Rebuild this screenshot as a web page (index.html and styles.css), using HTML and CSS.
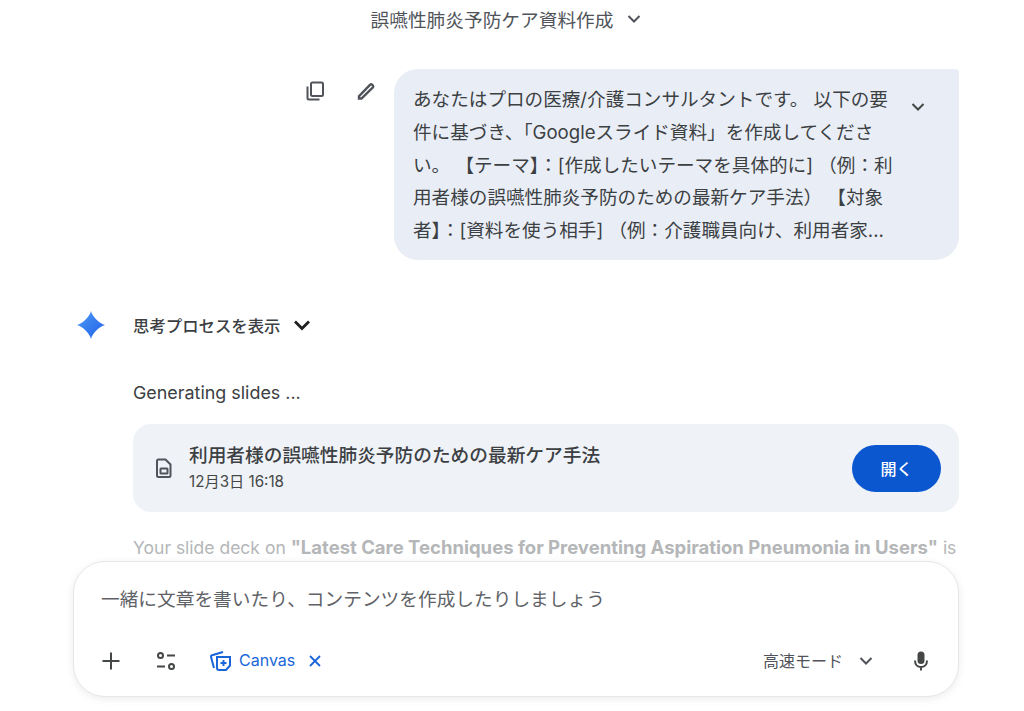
FILE: index.html
```html
<!DOCTYPE html>
<html lang="ja">
<head>
  <title>誤嚥性肺炎予防ケア資料作成</title>
  <link rel="stylesheet" href="styles.css">
</head>
<body>

<div class="page">
  <div class="title-bar">
    <span>誤嚥性肺炎予防ケア資料作成</span>
    <svg class="title-caret" viewBox="0 0 24 24"><path d="M6.500 9l5.500 5.500L17.500 9" /></svg>
  </div>

  <div class="user-row">
    <div class="user-actions">
      <svg class="action-icon" viewBox="0 0 24 24"><rect x="8" y="3.500" width="12" height="13.500" rx="1.500" /><path d="M4.500 7.500v11.500a1.500 1.500 0 0 0 1.500 1.500h10.500" /></svg>
      <svg class="action-icon" viewBox="0 0 24 24"><path class="pencil" d="M5 19.500v-2.300L16.200 5.600a1.300 1.300 0 0 1 1.800 0l.9.9a1.300 1.300 0 0 1 0 1.800L7.500 19.500z" /></svg>
    </div>
    <div class="bubble">
      <p>あなたはプロの医療/介護コンサルタントです。 以下の要<br>件に基づき、「Googleスライド資料」を作成してくださ<br>い。 【テーマ】：[作成したいテーマを具体的に] （例：利<br>用者様の誤嚥性肺炎予防のための最新ケア手法） 【対象<br>者】：[資料を使う相手] （例：介護職員向け、利用者家...</p>
      <svg class="bubble-caret" viewBox="0 0 24 24"><path d="M6.500 9l5.500 5.500L17.500 9" /></svg>
    </div>
  </div>

  <div class="thinking">
    <svg class="spark" viewBox="0 0 28 28">
      <defs>
        <linearGradient id="sparkFill" x1="0" y1="0" x2="1" y2="1">
          <stop offset="0" stop-color="#4f9bf5" />
          <stop offset="1" stop-color="#1f5fe8" />
        </linearGradient>
      </defs>
      <path d="M14 0C15.200 5.500 22.500 12.800 28 14C22.500 15.200 15.200 22.500 14 28C12.800 22.500 5.500 15.200 0 14C5.500 12.800 12.800 5.500 14 0Z" fill="url(#sparkFill)" />
    </svg>
    <span class="thinking-label">思考プロセスを表示</span>
    <svg class="thinking-caret" viewBox="0 0 24 24"><path d="M6 9l6 6 6-6" /></svg>
  </div>

  <div class="answer">
    <p class="generating">Generating slides ...</p>
    <div class="doc-card">
      <svg class="doc-icon" viewBox="0 0 24 24"><path d="M6.500 3.500h7l5 5v11a1.500 1.500 0 0 1-1.500 1.500h-10.500a1.500 1.500 0 0 1-1.500-1.500v-14.500a1.500 1.500 0 0 1 1.500-1.500z" /><rect x="8.500" y="12.500" width="7" height="5" rx="0.500" /></svg>
      <div class="doc-text">
        <div class="doc-title">利用者様の誤嚥性肺炎予防のための最新ケア手法</div>
        <div class="doc-date">12月3日 16:18</div>
      </div>
      <button class="open-btn">開く</button>
    </div>
    <p class="summary">Your slide deck on <b>"Latest Care Techniques for Preventing Aspiration Pneumonia in Users"</b> is</p>
  </div>

  <div class="composer">
    <div class="placeholder">一緒に文章を書いたり、コンテンツを作成したりしましょう</div>
    <div class="tools">
      <svg class="tool-icon" viewBox="0 0 24 24"><path d="M12 3.500v17M3.500 12h17" /></svg>
      <svg class="tool-icon" viewBox="0 0 24 24"><circle cx="6.500" cy="6.500" r="2.500" /><path d="M13 6.500h8M3 17.500h8" /><circle cx="17.500" cy="17.500" r="2.500" /></svg>
      <div class="canvas-chip">
        <svg class="canvas-icon" viewBox="0 0 24 24"><path d="M8 8h13v8.500l-4 4.500h-7a2 2 0 0 1-2-2z" /><path d="M14.500 11v6M11.500 14h6" /><path d="M5 19l-3-11a1.500 1.500 0 0 1 1-1.800L14 3" /></svg>
        <span class="canvas-label">Canvas</span>
        <svg class="canvas-close" viewBox="0 0 24 24"><path d="M6 6l12 12M18 6L6 18" /></svg>
      </div>
      <div class="mode">
        <span>高速モード</span>
        <svg class="mode-caret" viewBox="0 0 24 24"><path d="M6.500 9l5.500 5.500L17.500 9" /></svg>
      </div>
      <svg class="mic" viewBox="0 0 24 24"><rect x="8.500" y="2.500" width="7" height="12.500" rx="3.500" /><path class="mic-arc" d="M6 11.500c0 4 2.500 6.500 6 6.500s6-2.500 6-6.500M12 18v3.500" /></svg>
    </div>
  </div>
</div>

</body>
</html>
```

FILE: styles.css
```css
* {
  box-sizing: border-box;
}

html,
body {
  margin: 0;
  height: 711px;
  overflow: hidden;
}

body {
  font-family: Inter, "Noto Sans CJK JP", sans-serif;
  background-color: #fff;
  color: #444746;
}

svg {
  display: block;
  flex: none;
  fill: none;
  stroke: currentColor;
  stroke-width: 2;
}

p {
  margin: 0;
}

.page {
  position: relative;
  height: 711px;
  padding: 0 65px 0 73px;
}

.title-bar {
  display: flex;
  align-items: center;
  justify-content: center;
  gap: 9px;
  height: 37px;
  padding-right: 15px;
  font-size: 18.700px;
  color: #50545a;
}

.title-caret {
  width: 24px;
  height: 24px;
}

.user-row {
  display: flex;
  justify-content: flex-end;
  margin-top: 32px;
}

.user-actions {
  display: flex;
  gap: 27px;
  margin: 10px 16px 0 0;
  color: #50545a;
}

.action-icon {
  width: 24px;
  height: 24px;
}

.pencil {
  stroke-width: 2.400;
}

.bubble {
  display: flex;
  width: 565px;
  height: 191px;
  padding: 14px 29px 0 19px;
  background-color: #e9eef6;
  border-radius: 24px 4px 24px 24px;
  font-size: 18.6px;
  line-height: 32.75px;
  color: #3c4043;
}

.bubble p {
  flex: 1;
  white-space: nowrap;
}

.bubble-caret {
  width: 24px;
  height: 24px;
  margin-top: 12px;
  color: #444746;
}

.thinking {
  display: flex;
  align-items: center;
  height: 28px;
  margin: 51px 0 0 4px;
}

.spark {
  width: 28px;
  height: 28px;
  stroke: none;
}

.thinking-label {
  margin-left: 28px;
  font-size: 16.400px;
  font-weight: 500;
  color: #3c4043;
}

.thinking-caret {
  width: 28px;
  height: 28px;
  margin-left: 7px;
  stroke-width: 2.400;
  color: #1f1f1f;
}

.answer {
  padding-left: 60px;
}

.generating {
  margin-top: 40px;
  font-size: 17.900px;
  line-height: 28px;
  color: #3c4043;
}

.doc-card {
  display: flex;
  align-items: center;
  height: 88px;
  margin-top: 17px;
  padding: 0 18px 0 19px;
  background-color: #eff3f8;
  border-radius: 18px;
}

.doc-icon {
  width: 24px;
  height: 24px;
  color: #50545a;
}

.doc-text {
  flex: 1;
  margin-left: 13px;
}

.doc-title {
  font-size: 18.700px;
  font-weight: 500;
  line-height: 28px;
  color: #3c4043;
}

.doc-date {
  font-size: 15.200px;
  line-height: 24px;
  color: #444746;
}

.open-btn {
  width: 89px;
  height: 47px;
  border: 0;
  border-radius: 24px;
  background-color: #0b57d0;
  color: #fff;
  font-family: inherit;
  font-size: 16px;
  font-weight: 500;
}

.summary {
  margin-top: 21px;
  font-size: 17.500px;
  line-height: 28px;
  white-space: nowrap;
  color: #b4b6b8;
}

.summary b {
  font-size: 18.500px;
}

.composer {
  position: absolute;
  left: 73px;
  top: 561px;
  width: 886px;
  height: 136px;
  padding: 24px 25px 0 27px;
  background-color: #fff;
  border: 1px solid #e6e7e8;
  border-radius: 32px;
  box-shadow: 0 2px 8px rgba(0, 0, 0, 0.08);
}

.placeholder {
  font-size: 18.700px;
  line-height: 28px;
  color: #5f6368;
}

.tools {
  display: flex;
  align-items: center;
  margin: 34px 0 0 -2.500px;
  color: #444746;
}

.tool-icon {
  width: 24px;
  height: 24px;
  margin-right: 31.500px;
}

.canvas-chip {
  display: flex;
  align-items: center;
  margin-left: -1px;
  color: #1a66d9;
  font-size: 16px;
}

.canvas-label {
  padding-bottom: 2px;
}

.canvas-icon {
  width: 24px;
  height: 24px;
  margin-right: 6.500px;
}

.canvas-close {
  width: 20px;
  height: 20px;
  margin-left: 10px;
  stroke-width: 2.200;
}

.mode {
  display: flex;
  align-items: center;
  margin-left: auto;
  font-size: 16px;
  color: #50545a;
}

.mode span {
  padding-bottom: 2px;
}

.mode-caret {
  width: 24px;
  height: 24px;
  margin-left: 10.500px;
}

.mic {
  width: 24px;
  height: 24px;
  margin-left: 31.500px;
  fill: #444746;
  stroke: none;
}

.mic-arc {
  fill: none;
  stroke: #444746;
}
```
